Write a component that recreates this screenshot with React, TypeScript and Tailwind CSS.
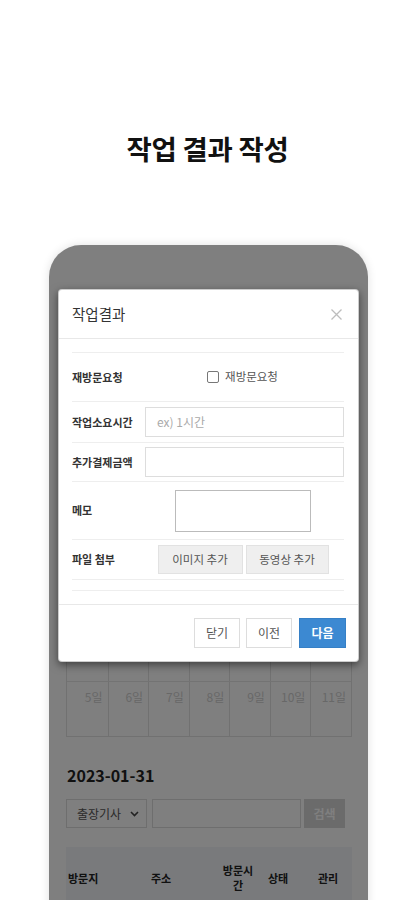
import React from "react";

const font = { fontFamily: '"Noto Sans CJK KR", "Noto Sans", sans-serif' };

function CalRow({ days, top }: { days: string[]; top?: boolean }) {
  return (
    <div className={`grid grid-cols-7 h-[55px] ${top ? "" : "border-t border-[#e6e6e6]"}`}>
      {days.map((d, i) => (
        <div
          key={i}
          className={`text-right pr-[5px] pt-[7px] text-[12px] leading-[16px] text-[#d0d0d0] ${i > 0 ? "border-l border-[#e2e2e2]" : ""}`}
        >
          {d}
        </div>
      ))}
    </div>
  );
}

export default function App() {
  return (
    <div className="w-[415px] h-[900px] overflow-hidden bg-white flex flex-col items-center" style={font}>
      <div className="mt-[128px] h-[40px] leading-[40px] text-[27.5px] font-bold text-[#111] tracking-[-0.3px]">
        작업 결과 작성
      </div>
      <div className="mt-[77px] w-[319px] h-[700px] shrink-0 relative rounded-t-[32px] overflow-hidden bg-white shadow-[0_0_10px_rgba(0,0,0,0.12)] ml-[2px]">
        {/* app screen */}
        <div className="flex flex-col">
          <div className="h-[381px]" />
          <div className="ml-[17px] mr-[16px] border-l border-r border-b border-[#e2e2e2]">
            <CalRow days={["", "", "", "", "", "", ""]} top />
            <CalRow days={["5일", "6일", "7일", "8일", "9일", "10일", "11일"]} />
          </div>
          <div className="mt-[26px] pl-[18px] text-[16px] leading-[24px] font-bold text-[#222]">2023-01-31</div>
          <div className="mt-[12px] ml-[17px] mr-[23px] flex h-[29px]">
            <div className="w-[81px] h-full border border-[#ddd] flex items-center justify-between pl-[10px] pr-[7px] text-[12px] text-[#555]">
              <span>출장기사</span>
              <svg width="9" height="6" viewBox="0 0 9 6">
                <path d="M1 1l3.5 3.5L8 1" stroke="#444" strokeWidth="1.6" fill="none" />
              </svg>
            </div>
            <div className="ml-[5px] w-[149px] h-full border border-[#ddd]" />
            <div className="ml-[3px] w-[41px] h-full bg-[#d6d6d6] flex items-center justify-center text-[12px] font-bold text-white">
              검색
            </div>
          </div>
          <div className="mt-[19px] ml-[17px] mr-[16px] bg-[#f2f5f9] h-[80px] pt-[16px] flex items-start text-[11px] font-bold text-[#222] leading-[15px]">
            <span className="w-[85px] pl-[2px] mt-[8px]">방문지</span>
            <span className="w-[70px] mt-[8px]">주소</span>
            <span className="w-[34px] text-center">방문시간</span>
            <span className="w-[50px] pl-[13px] mt-[8px]">상태</span>
            <span className="pl-[13px] mt-[8px]">관리</span>
          </div>
        </div>
        {/* backdrop */}
        <div className="absolute inset-0 bg-black/50" />
        {/* modal */}
        <div className="absolute left-[9px] right-[9px] top-[44px] bg-white rounded-[4px] border border-black/20 shadow-[0_3px_9px_rgba(0,0,0,0.5)]">
          <div className="h-[49px] border-b border-[#e8e8e8] flex items-center justify-between pl-[13px] pr-[16px]">
            <span className="text-[14.5px] text-[#333]">작업결과</span>
            <svg width="11" height="11" viewBox="0 0 11 11">
              <path d="M0.5 0.5l10 10M10.5 0.5l-10 10" stroke="#bdbdbd" strokeWidth="1.3" />
            </svg>
          </div>
          <div className="pt-[13px] pb-[13px] pl-[13px] pr-[14px]">
            <div className="border-b border-[#eee]">
              <div className="h-[49px] border-t border-[#eee] flex items-center">
                <span className="w-[73px] text-[11px] font-bold text-[#333]">재방문요청</span>
                <div className="flex-1 flex justify-center items-center gap-[6px] pr-[4px]">
                  <span className="w-[12px] h-[12px] border border-[#777] rounded-[2px]" />
                  <span className="text-[11.5px] text-[#555]">재방문요청</span>
                </div>
              </div>
              <div className="h-[41px] border-t border-[#eee] flex items-center">
                <span className="w-[73px] text-[11px] font-bold text-[#333]">작업소요시간</span>
                <div className="flex-1 h-[30px] border border-[#ddd] flex items-center pl-[11px] text-[12px] text-[#aaa]">
                  ex) 1시간
                </div>
              </div>
              <div className="h-[39px] border-t border-[#eee] flex items-center">
                <span className="w-[73px] text-[11px] font-bold text-[#333]">추가결제금액</span>
                <div className="flex-1 h-[30px] border border-[#ddd]" />
              </div>
              <div className="h-[58px] border-t border-[#eee] flex items-center">
                <span className="w-[73px] text-[11px] font-bold text-[#333]">메모</span>
                <div className="flex-1 flex justify-center pr-[4px]">
                  <div className="w-[136px] h-[42px] border border-[#bbb]" />
                </div>
              </div>
              <div className="h-[40px] border-t border-[#eee] flex items-center">
                <span className="w-[73px] text-[11px] font-bold text-[#333]">파일 첨부</span>
                <div className="flex-1 flex justify-center gap-[3px] pr-[3px]">
                  <div className="w-[85px] h-[29px] bg-[#efefef] border border-[#e2e2e2] flex items-center justify-center text-[11.5px] text-[#555]">
                    이미지 추가
                  </div>
                  <div className="w-[83px] h-[29px] bg-[#efefef] border border-[#e2e2e2] flex items-center justify-center text-[11.5px] text-[#555]">
                    동영상 추가
                  </div>
                </div>
              </div>
              <div className="h-[11px] border-t border-[#eee]" />
            </div>
          </div>
          <div className="border-t border-[#e8e8e8] pt-[13px] pb-[13px] pr-[12px] flex justify-end gap-[6px]">
            <div className="w-[46px] h-[30px] border border-[#ddd] flex items-center justify-center text-[12px] text-[#555]">닫기</div>
            <div className="w-[46px] h-[30px] border border-[#ddd] flex items-center justify-center text-[12px] text-[#555] mr-[1px]">이전</div>
            <div className="w-[47px] h-[30px] bg-[#3c89d2] border border-[#3680c6] flex items-center justify-center text-[12px] font-bold text-white">다음</div>
          </div>
        </div>
      </div>
    </div>
  );
}
